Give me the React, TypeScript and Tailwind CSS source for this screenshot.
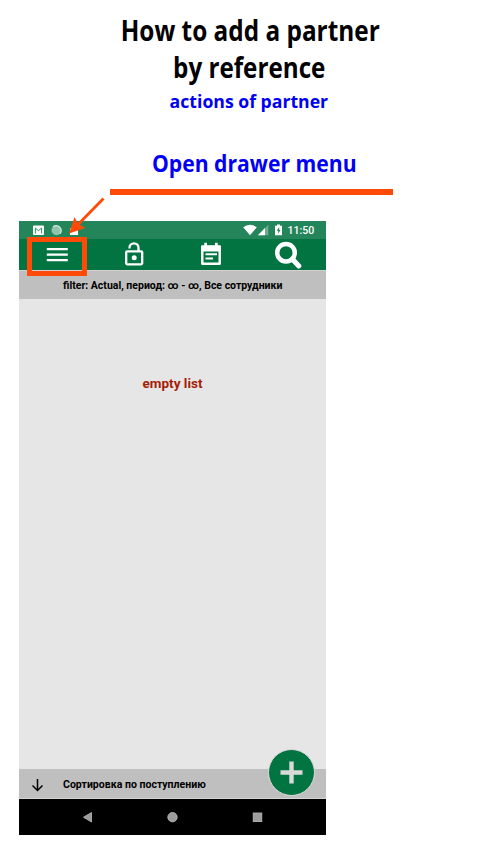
import React from 'react';

function StatusBar() {
  return (
    <div className="relative h-[18px] bg-[#25855a]">
      <svg className="absolute inset-0" width="307" height="18" viewBox="0 0 307 18">
        <rect x="14" y="4.500" width="11" height="9.500" rx="1" fill="#fff" />
        <path d="M16.400 12.600V7l3.100 2.700L22.600 7v5.600" fill="none" stroke="#25855a" strokeWidth=".9" />
        <circle cx="37.500" cy="9.300" r="5" fill="#8fc3ab" />
        <path d="M34 5.800a5 5 0 0 1 7 7" fill="none" stroke="#d0e6dc" strokeWidth="1.200" />
        <path d="M51 14V8l3.500-3.500H59V14z" fill="#fff" />
        <path d="M224.200 6.300Q231 1.300 237.800 6.300L231 14.200z" fill="#fff" />
        <path d="M249.300 3.800v10.400h-10.400z" fill="#70ac90" />
        <path d="M246 7.100V14.200H238.900z" fill="#fff" />
        <path d="M256 4.800h2V3.600h3v1.200h2v9.400h-7z" fill="#fff" />
        <path d="M260.200 6l-2.500 3.800h1.500v3l2.300-3.800h-1.300z" fill="#25855a" />
      </svg>
      <span className="absolute left-[268.500px] top-[2px] text-[10.600px] font-medium leading-[16px] text-white">11:50</span>
    </div>
  );
}

function Toolbar() {
  return (
    <div className="grid h-[31px] grid-cols-4 items-center justify-items-center bg-[#027442] text-white">
      <svg width="22" height="31" viewBox="0 0 22 31">
        <path d="M.800 10.200h21M.800 15.700h21M.800 21.200h21" stroke="currentColor" strokeWidth="2.300" />
      </svg>
      <svg width="20" height="31" viewBox="0 0 20 31" fill="none" stroke="currentColor">
        <rect x="2.200" y="12.300" width="16" height="13" rx="1" strokeWidth="2.300" />
        <path d="M5.500 9.500V8.800a4.500 4.500 0 0 1 9 0v3.500" strokeWidth="2.300" />
        <circle cx="10.200" cy="18.800" r="2.500" fill="currentColor" stroke="none" />
      </svg>
      <svg width="22" height="31" viewBox="0 0 22 31" fill="none" stroke="currentColor">
        <path d="M2.300 7.500h17.400v17.200H2.300z" strokeWidth="2.400" strokeLinejoin="round" />
        <path d="M1.500 6.800h19v5.700h-19zM4.300 3.700h2.700v4H4.300zM15 3.700h2.700v4H15z" fill="currentColor" stroke="none" />
        <path d="M5.500 15.300h11.500M5.500 19.500h7.500" strokeWidth="2.100" />
      </svg>
      <svg width="28" height="31" viewBox="0 0 28 31" fill="none" stroke="currentColor">
        <circle cx="12" cy="13.700" r="8.800" strokeWidth="4.500" />
        <path d="M18.500 20.200l6.300 6.800" strokeWidth="5" strokeLinecap="round" />
      </svg>
    </div>
  );
}

export default function App() {
  return (
    <div className="relative h-[850px] w-[500px] overflow-hidden bg-white font-['Roboto','Liberation_Sans',sans-serif]">
      <header className="flex h-[221px] flex-col items-center pt-[11px] font-['Open_Sans','Noto_Sans',sans-serif] font-bold">
        <h1 className="flex w-[500px] flex-col items-center whitespace-nowrap text-[29px] leading-[37px] text-black">
          <span className="block origin-center scale-x-[0.840]">How to add a partner</span>
          <span className="-ml-[1px] block origin-center scale-x-[0.835]">by reference</span>
        </h1>
        <p className="-ml-[2px] mt-[3px] scale-x-[0.980] whitespace-nowrap text-[18px] leading-[26px] text-[#0000f5]">actions of partner</p>
        <p className="mt-[34px] ml-[9px] scale-x-[0.920] whitespace-nowrap text-[23px] leading-[30px] text-[#0000f5]">Open drawer menu</p>
        <div className="mt-[11px] ml-[3px] h-[6px] w-[283px] bg-[#ff4a08]" />
      </header>

      <main className="relative ml-[19px] flex h-[614px] w-[307px] flex-col bg-[#e6e6e6]">
        <StatusBar />
        <Toolbar />
        <div className="h-[29px] border-t border-[#d4cfd1] bg-[#bfbfbf] pl-[44px] pt-[1px] text-[10.500px] font-bold leading-[28px] text-black whitespace-nowrap">
          filter: Actual, период: ∞ - ∞, Все сотрудники
        </div>
        <div className="flex-1 pt-[74px] text-center text-[13.500px] font-bold leading-[20px] text-[#a51e08]">empty list</div>
        <div className="flex h-[30px] items-center border-b border-[#d5d5d5] bg-[#bfbfbf] pl-[12px] text-[10.550px] font-bold text-black">
          <svg className="mt-[3px]" width="12" height="14" viewBox="0 0 12 14" fill="none" stroke="currentColor" strokeWidth="1.500">
            <path d="M6.500 1v11.500M1.500 7.500l5 5 5-5" />
          </svg>
          <span className="ml-[20px] mt-[2px] whitespace-nowrap">Сортировка по поступлению</span>
        </div>
        <nav className="h-[36px] bg-black">
          <svg width="307" height="36" viewBox="0 0 307 36" fill="#9c9c9c" stroke="#bcbcbc" strokeWidth=".8">
            <path d="M72.500 13.500v9.500L64.500 18.200z" />
            <circle cx="153.500" cy="18.200" r="4.700" />
            <rect x="234.200" y="14" width="8.600" height="8.600" />
          </svg>
        </nav>
        <button className="absolute left-[249px] top-[528px] flex size-[47px] items-center justify-center rounded-full border border-[#e0dadd] bg-[#027442]" aria-label="Add">
          <svg width="23" height="23" viewBox="0 0 23 23">
            <path d="M11.500 .500v22M.500 11.500h22" stroke="#d9d9d9" strokeWidth="4.400" />
          </svg>
        </button>
      </main>

      <div className="absolute left-[27px] top-[237px] h-[39px] w-[60px] border-[5px] border-[#ff4a08]" />
      <svg className="absolute left-[60px] top-[190px]" width="50" height="50" viewBox="0 0 50 50">
        <path d="M43.500 8.500L18 34.500" stroke="#ff4a08" strokeWidth="2.800" />
        <path d="M9 43.500L14.500 27.300l3.800 6.400 7 4.300z" fill="#ff4a08" />
      </svg>
    </div>
  );
}
